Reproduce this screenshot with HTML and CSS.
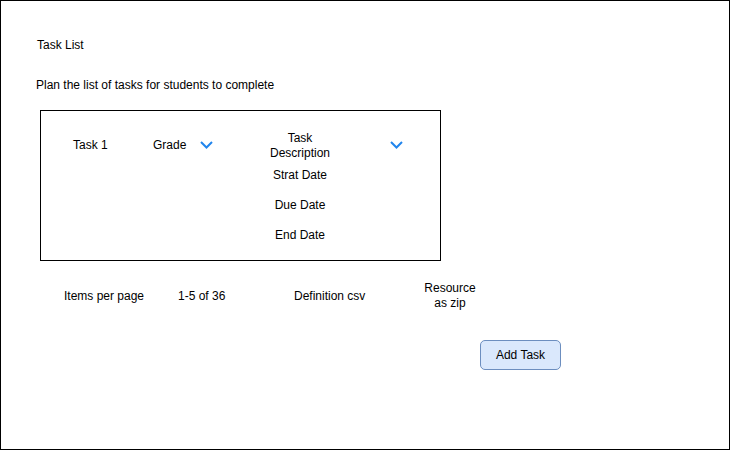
FILE: index.html
```html
<!DOCTYPE html>
<html>
<head>
<meta charset="utf-8">
<link rel="stylesheet" href="styles.css">
</head>
<body>
<div class="frame">
  <div class="title">Task List</div>
  <div class="subtitle">Plan the list of tasks for students to complete</div>
  <div class="card">
    <div class="task-name">Task 1</div>
    <div class="grade">Grade</div>
    <svg class="chevron" width="13" height="8" viewBox="0 0 13 8"><polyline points="1,1 6.5,6.5 12,1" fill="none" stroke="#2185ed" stroke-width="2"/></svg>
    <div class="details">
      <div class="desc">Task<br>Description</div>
      <div class="date">Strat Date</div>
      <div class="date">Due Date</div>
      <div class="date">End Date</div>
    </div>
    <svg class="chevron chevron-2" width="13" height="8" viewBox="0 0 13 8"><polyline points="1,1 6.5,6.5 12,1" fill="none" stroke="#2185ed" stroke-width="2"/></svg>
  </div>
  <div class="footer">
    <div class="f-items">Items per page</div>
    <div class="f-range">1-5 of 36</div>
    <div class="f-def">Definition csv</div>
    <div class="f-res">Resource<br>as zip</div>
  </div>
  <button class="add-btn">Add Task</button>
</div>
</body>
</html>
```
FILE: styles.css
```css
html, body {
  margin: 0;
  padding: 0;
  background: #ffffff;
}
body {
  font-family: "Liberation Sans", Arial, sans-serif;
  font-size: 12px;
  line-height: 14.4px;
  color: #000000;
}
.frame {
  box-sizing: border-box;
  width: 730px;
  height: 450px;
  border: 1px solid #000000;
  padding: 37px 0 0 35px;
  display: flex;
  flex-direction: column;
  align-items: flex-start;
}
.title {
  margin-left: 1px;
}
.subtitle {
  margin-top: 25.6px;
}
.card {
  box-sizing: border-box;
  margin-top: 18px;
  margin-left: 4px;
  width: 401px;
  height: 151px;
  border: 1px solid #000000;
  padding: 20px 0 0 32px;
  display: flex;
  align-items: flex-start;
}
.task-name {
  width: 80px;
  margin-top: 7px;
}
.grade {
  width: 47px;
  margin-top: 7px;
}
.chevron {
  display: block;
  flex: none;
  margin-top: 10px;
}
.details {
  width: 80px;
  margin-left: 47px;
  text-align: center;
  display: flex;
  flex-direction: column;
}
.date {
  line-height: 30px;
}
.chevron-2 {
  margin-left: 50px;
}
.footer {
  margin-top: 20px;
  margin-left: 28px;
  display: flex;
  align-items: center;
}
.f-items { width: 114px; }
.f-range { width: 116px; }
.f-def { width: 111px; }
.f-res { width: 90px; text-align: center; }
.add-btn {
  box-sizing: border-box;
  margin-top: 30px;
  margin-left: 444px;
  width: 81px;
  height: 30px;
  padding: 0;
  border: 1px solid #6c8ebf;
  border-radius: 5px;
  background: #dae8fc;
  font-family: "Liberation Sans", Arial, sans-serif;
  font-size: 12px;
  color: #000000;
}
```
